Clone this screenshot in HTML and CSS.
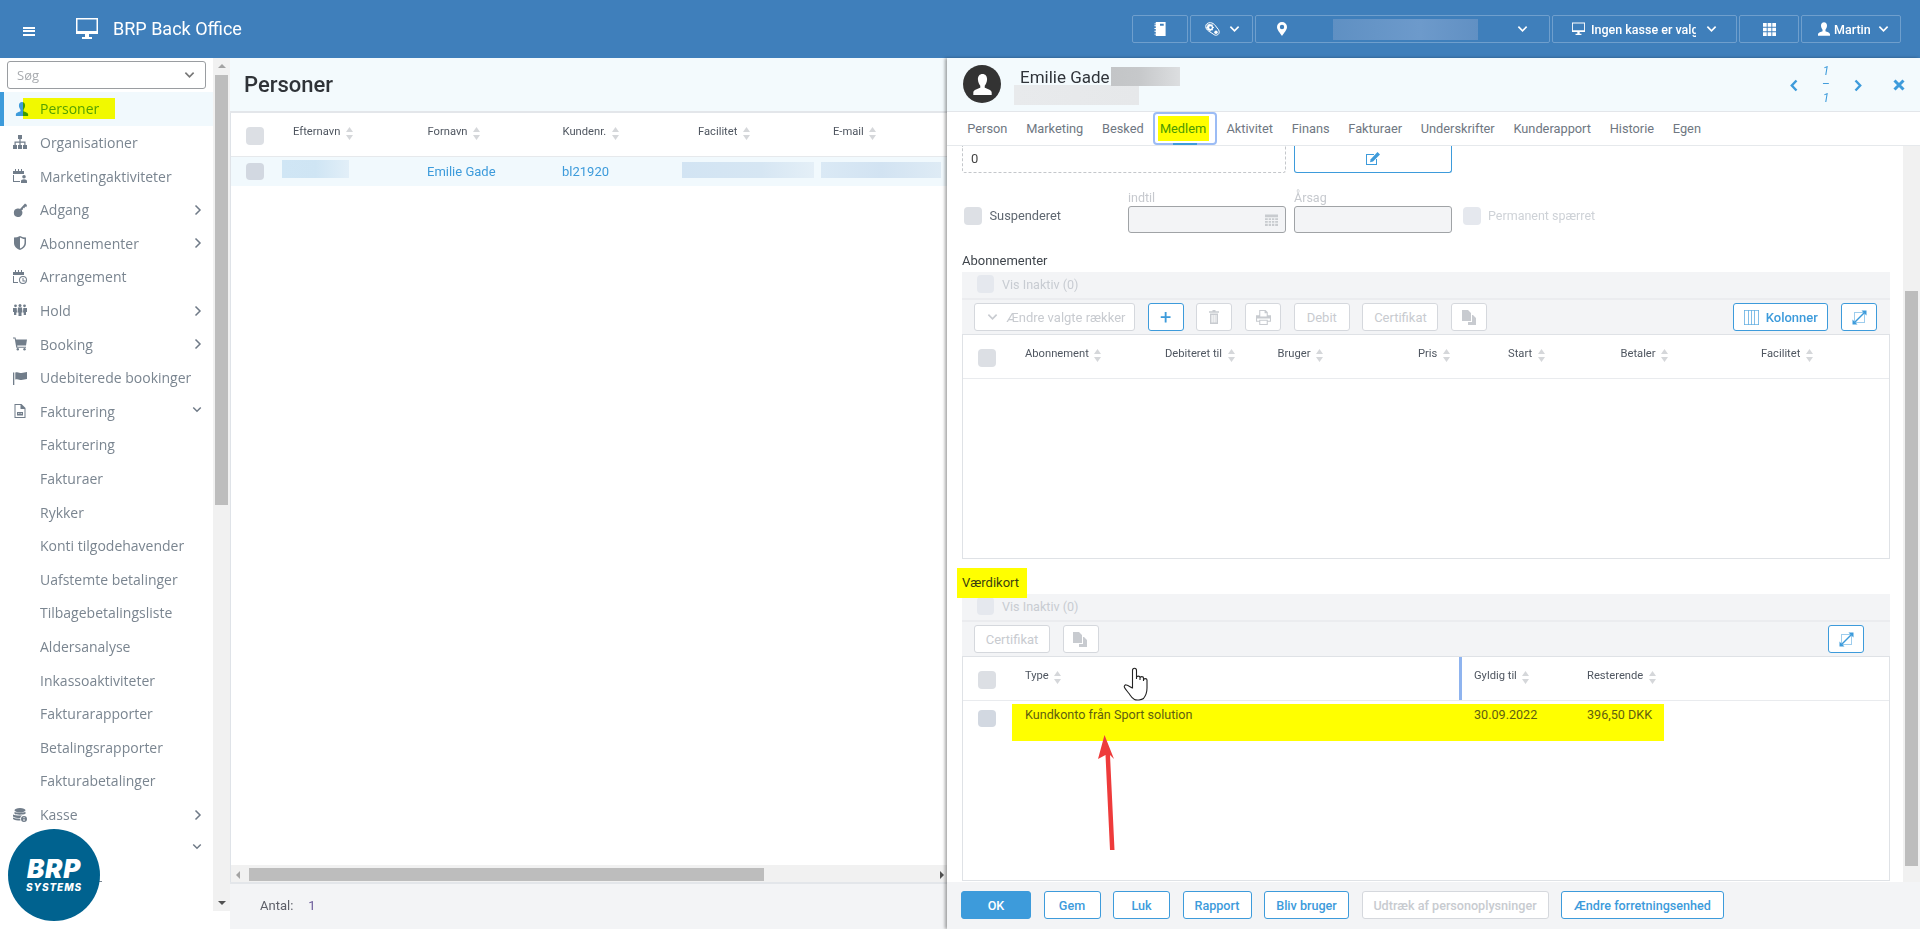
FILE: index.html
```html
<!DOCTYPE html>
<html lang="da">
<head>
<meta charset="utf-8">
<title>BRP Back Office</title>
<link rel="stylesheet" href="styles.css">
</head>
<body>
<svg class="defs" xmlns="http://www.w3.org/2000/svg">
  <symbol id="sort" viewBox="0 0 7 13"><path d="M3.500 0 7 5H0zM3.500 13 0 8h7z"/></symbol>
  <symbol id="chev-r" viewBox="0 0 8 12"><path d="M1.500 1.500 6 6l-4.500 4.500" fill="none" stroke="currentColor" stroke-width="1.500"/></symbol>
  <symbol id="chev-b" viewBox="0 0 8 13"><path d="M1.500 1.500 6.200 6.500 1.500 11.500" fill="none" stroke="currentColor" stroke-width="2.400"/></symbol>
  <symbol id="chev-d" viewBox="0 0 12 8"><path d="M1.500 1.500 6 6l4.500-4.500" fill="none" stroke="currentColor" stroke-width="1.800"/></symbol>
  <symbol id="close-x" viewBox="0 0 12 12"><path d="M1.500 1.500l9 9M10.500 1.500l-9 9" fill="none" stroke="currentColor" stroke-width="3"/></symbol>
  <symbol id="user" viewBox="0 0 14 16"><path d="M7 0c2.200 0 3.500 1.700 3.500 4S9.300 8 8.700 9v1.500c1.500.7 5.300 1.600 5.300 3.500v2H0v-2c0-1.900 3.800-2.800 5.300-3.500V9C4.700 8 3.500 6.300 3.500 4S4.800 0 7 0z"/></symbol>
  <symbol id="sitemap" viewBox="0 0 14 14"><path d="M5 0h4v4H7.600v2.500H12.500V10H14v4h-4v-4h1.300V7.700H7.600V10H9v4H5v-4h1.400V7.700H2.700V10H4v4H0v-4h1.500V6.500h4.900V4H5z"/></symbol>
  <symbol id="cal-user" viewBox="0 0 14 14"><path d="M0 2h2V0h1v2h2V0h1v2h2V0h1v2h2v3H0zM0 6h1v6h6v1H0z"/><path d="M11 6a1.800 1.800 0 1 1 0 3.600A1.800 1.800 0 0 1 11 6zM8 14v-2c0-1 1.500-1.800 3-1.800s3 .8 3 1.800v2z"/></symbol>
  <symbol id="key" viewBox="0 0 14 14"><path d="M4.500 5.500a4.300 4.300 0 1 1 0 8.500 4.300 4.300 0 0 1 0-8.500zM7 6l5-5.500L14 2l-.7 2.200L12 3.600l-.5 1.600-1.300-.4-.2 1.700-1.600.8z"/></symbol>
  <symbol id="shield" viewBox="0 0 14 14"><path d="M1 1.500C3 1.500 5 1 7 0c2 1 4 1.500 6 1.500V7c0 3.500-3 6-6 7-3-1-6-3.500-6-7zM7 1.500v11c2.200-.9 4.500-2.900 4.500-5.500V3C10 3 8.500 2.300 7 1.500z"/></symbol>
  <symbol id="cal-clock" viewBox="0 0 14 14"><path d="M0 2h2V0h1v2h2V0h1v2h2V0h1v2h2v3H0zM0 6h1v6h4v1H0z"/><path fill-rule="evenodd" d="M10 6a4 4 0 1 1 0 8 4 4 0 0 1 0-8zm0 1a3 3 0 1 0 0 6 3 3 0 0 0 0-6zm-.5 1h1v2.500h2v1h-3z"/></symbol>
  <symbol id="group" viewBox="0 0 14 12"><circle cx="7" cy="1.500" r="1.500"/><circle cx="2.500" cy="1.800" r="1.400"/><circle cx="11.500" cy="1.800" r="1.400"/><path d="M5 3.500h4l.5 5H8.500V12h-3V8.500h-1zM0 4h3.700l.3 4.500H3.300V11H1V8H0zM10.300 4H14v4h-1v3h-2.300V8.500H10z"/></symbol>
  <symbol id="cart" viewBox="0 0 14 13"><path d="M0 0h2.500l.5 2H14l-1 6H4.200l.2 1.300H13v1H3.300L1.700 1H0z"/><circle cx="4.800" cy="11.800" r="1.200"/><circle cx="11.500" cy="11.800" r="1.200"/></symbol>
  <symbol id="flag" viewBox="0 0 14 14"><path d="M0 1.500h1.300V14H0zM2.300 1.500C5 .5 6 2 8.500 2c2 0 3.500-1 5.500-1v7c-2 0-3.500 1-5.500 1C6 9 5 7.500 2.300 8.500z"/></symbol>
  <symbol id="invoice" viewBox="0 0 11 14"><path fill-rule="evenodd" d="M0 0h7l4 4v10H0zm1 1v12h9V5H6V1zM2.500 8h6v3.500h-6zm1 1v.8h.8V9zm1.600 0v.8h.8V9zm1.600 0v.8h.8V9z"/></symbol>
  <symbol id="cash" viewBox="0 0 14 14"><ellipse cx="7" cy="2.200" rx="5.500" ry="2.200"/><path d="M1.500 3.800C3 5 10 5 12.500 3.800v2C10 7 3 7 1.500 5.800zM0 6.500c2 1.200 8 1.400 9.500.7A4 4 0 0 0 7.200 10C4 10 1.500 9.500 0 8.500zM0 9.500c1.500.8 4 1.200 7.200 1.200l.3 1.800C4 12.500 1.500 12 0 11z"/><path fill-rule="evenodd" d="M11 8a3 3 0 1 1 0 6 3 3 0 0 1 0-6zm-.5 1v1h1V9zm0 1.700V13h1v-2.300z"/></symbol>
  <symbol id="book" viewBox="0 0 12 15"><path fill-rule="evenodd" d="M1.500 0H12v15H1.500v-1.500H0v-1h1.500v-2H0v-1h1.500v-2H0v-1h1.500v-2H0v-1h1.500V2.500H0v-1h1.500zM6 2v2h4V2z"/></symbol>
  <symbol id="gear-tag" viewBox="0 0 15 14"><path fill="none" stroke="currentColor" stroke-width="1" d="M.7 4.500C.7 2 3 .5 5.500.7c2 .2 3.500 1.300 4.500 2.500l3.500 4.500c1.300 2 .8 4-.7 5-1.500 1-3.500.5-4.700-.7L3.500 9C2 7.700.7 6.500.7 4.500z"/><path fill-rule="evenodd" d="M5.500 2.300l.9.3.7-.3.8.8-.3.8.5.8.8.2v1.100l-.8.3-.4.8.3.7-.8.8-.8-.3-.8.4-.2.8H4.800l-.3-.8-.8-.4-.7.3-.8-.8.3-.8-.4-.7-.8-.3V4.700l.8-.3.4-.8-.3-.7.8-.8.7.3.8-.4zm0 2a1.300 1.300 0 1 0 0 2.600 1.300 1.300 0 0 0 0-2.600z"/><circle cx="11" cy="10.300" r="1.700"/></symbol>
  <symbol id="pin" viewBox="0 0 10 14"><path fill-rule="evenodd" d="M5 0a5 5 0 0 1 5 5c0 3-3.500 6.500-5 9-1.500-2.500-5-6-5-9a5 5 0 0 1 5-5zm0 2.800a2.200 2.200 0 1 0 0 4.400 2.200 2.200 0 0 0 0-4.400z"/></symbol>
  <symbol id="monitor" viewBox="0 0 22 22"><path fill-rule="evenodd" d="M0 0h22v16H0zm1.500 1.500V13h19V1.500zM9 16h4v3h3v2H6v-2h3z"/></symbol>
  <symbol id="grid9" viewBox="0 0 14 14"><path d="M0 0h4v4H0zM5 0h4v4H5zM10 0h4v4h-4zM0 5h4v4H0zM5 5h4v4H5zM10 5h4v4h-4zM0 10h4v4H0zM5 10h4v4H5zM10 10h4v4h-4z"/></symbol>
  <symbol id="edit" viewBox="0 0 14 14"><path d="M0 2h8v1H1v9h9V7h1v6H0z"/><path d="M11.500 0 14 2.500 7 9.500l-3 .7.700-3z"/></symbol>
  <symbol id="calendar" viewBox="0 0 14 14"><path d="M0 1h14v3H0zM0 5h3v2H0zM4 5h2.500v2H4zM7.500 5H10v2H7.500zM11 5h3v2h-3zM0 8h3v2H0zM4 8h2.500v2H4zM7.500 8H10v2H7.500zM11 8h3v2h-3zM0 11h3v2.500H0zM4 11h2.500v2.500H4zM7.500 11H10v2.500H7.500zM11 11h3v2.500h-3z"/></symbol>
  <symbol id="trash" viewBox="0 0 10 14"><path d="M3.500 0h3v1.200H10v1.500H0V1.200h3.500zM1 3.500h8V14H1zm1.500 1.500v7.500h1.200V5zm2 0v7.500h1.200V5zm2 0v7.500h1V5z"/></symbol>
  <symbol id="print" viewBox="0 0 14 14"><path fill-rule="evenodd" d="M3 0h6l2 2v3h3v6h-3v3H3v-3H0V5h3zm1 1v5h6V3H8V1zM1 8v2h2V9h8v1h2V8zm3 2v3h6v-3z"/></symbol>
  <symbol id="copy" viewBox="0 0 15 15"><path d="M0 0h6l3 3v8H0zM10 5l1 0 3 3v7H6v-3h4z"/></symbol>
  <symbol id="cols" viewBox="0 0 15 15"><path fill-rule="evenodd" opacity=".8" d="M0 0h15v15H0zm.8.800v13.400h3.400V.8zm4.200 0v13.400h2.100V.8zm2.900 0v13.400h2.100V.8zm2.900 0v13.400h3.400V.8z"/></symbol>
  <symbol id="expand" viewBox="0 0 15 15"><rect x="2.500" y="2.500" width="10" height="10" fill="none" stroke="currentColor" opacity=".5"/><path d="M3 12 12 3" fill="none" stroke="currentColor" stroke-width="1.400"/><path d="M9.500.5H14.500V5.500zM.5 9.500V14.500H5.500z"/></symbol>
</svg>

<div class="app">
  <header class="topbar">
    <div class="brand">
      <div class="burger"><span></span><span></span><span></span></div>
      <svg class="ic-monitor"><use href="#monitor"/></svg>
      <div class="brand-name">BRP Back Office</div>
    </div>
    <nav class="top-tools">
      <div class="tool tool-book"><svg class="ic ic-top"><use href="#book"/></svg></div>
      <div class="tool tool-tag"><svg class="ic ic-top"><use href="#gear-tag"/></svg><svg class="ic-chev"><use href="#chev-d"/></svg></div>
      <div class="tool tool-loc"><svg class="ic ic-pin"><use href="#pin"/></svg><span class="blur-top"></span><svg class="ic-chev"><use href="#chev-d"/></svg></div>
      <div class="tool tool-kasse"><svg class="ic ic-mini"><use href="#monitor"/></svg><span class="kasse-txt">Ingen kasse er valg</span><svg class="ic-chev"><use href="#chev-d"/></svg></div>
      <div class="tool tool-grid"><svg class="ic ic-grid"><use href="#grid9"/></svg></div>
      <div class="tool tool-user"><svg class="ic ic-top"><use href="#user"/></svg><span>Martin</span><svg class="ic-chev"><use href="#chev-d"/></svg></div>
    </nav>
  </header>

  <div class="workspace">
    <aside class="sidebar">
      <div class="side-col">
        <div class="side-search"><span>Søg</span><svg class="ic-chev"><use href="#chev-d"/></svg></div>
        <ul class="menu">
          <li class="item active"><svg class="mi"><use href="#user"/></svg><span class="hl-name">Personer</span></li>
          <li class="item"><svg class="mi"><use href="#sitemap"/></svg>Organisationer</li>
          <li class="item"><svg class="mi"><use href="#cal-user"/></svg>Marketingaktiviteter</li>
          <li class="item"><svg class="mi"><use href="#key"/></svg>Adgang<svg class="arrow"><use href="#chev-r"/></svg></li>
          <li class="item"><svg class="mi"><use href="#shield"/></svg>Abonnementer<svg class="arrow"><use href="#chev-r"/></svg></li>
          <li class="item"><svg class="mi"><use href="#cal-clock"/></svg>Arrangement</li>
          <li class="item"><svg class="mi"><use href="#group"/></svg>Hold<svg class="arrow"><use href="#chev-r"/></svg></li>
          <li class="item"><svg class="mi"><use href="#cart"/></svg>Booking<svg class="arrow"><use href="#chev-r"/></svg></li>
          <li class="item"><svg class="mi"><use href="#flag"/></svg>Udebiterede bookinger</li>
          <li class="item"><svg class="mi"><use href="#invoice"/></svg>Fakturering<svg class="arrow-d"><use href="#chev-d"/></svg></li>
          <li class="item sub">Fakturering</li>
          <li class="item sub">Fakturaer</li>
          <li class="item sub">Rykker</li>
          <li class="item sub">Konti tilgodehavender</li>
          <li class="item sub">Uafstemte betalinger</li>
          <li class="item sub">Tilbagebetalingsliste</li>
          <li class="item sub">Aldersanalyse</li>
          <li class="item sub">Inkassoaktiviteter</li>
          <li class="item sub">Fakturarapporter</li>
          <li class="item sub">Betalingsrapporter</li>
          <li class="item sub">Fakturabetalinger</li>
          <li class="item"><svg class="mi"><use href="#cash"/></svg>Kasse<svg class="arrow"><use href="#chev-r"/></svg></li>
          <li class="item"><svg class="arrow-d"><use href="#chev-d"/></svg></li>
          <li class="item sub tail"></li>
        </ul>
      </div>
      <div class="vscroll side-scroll">
        <i class="tri-up"></i>
        <div class="thumb thumb-side"></div>
        <i class="tri-down"></i>
      </div>
      <div class="logo"><b>BRP</b><em>SYSTEMS</em></div>
    </aside>

    <main class="list">
      <div class="list-head"><h1>Personer</h1></div>
      <div class="list-body">
        <div class="list-row list-row-h">
          <span class="cb"></span>
          <span class="th">Efternavn<svg class="sort"><use href="#sort"/></svg></span>
          <span class="th">Fornavn<svg class="sort"><use href="#sort"/></svg></span>
          <span class="th">Kundenr.<svg class="sort"><use href="#sort"/></svg></span>
          <span class="th">Facilitet<svg class="sort"><use href="#sort"/></svg></span>
          <span class="th">E-mail<svg class="sort"><use href="#sort"/></svg></span>
        </div>
        <div class="list-row list-row-d">
          <span class="cb cb-row"></span>
          <span class="blur blur-a"></span>
          <a class="link">Emilie Gade</a>
          <a class="link">bl21920</a>
          <span class="blur blur-b"></span>
          <span class="blur blur-c"></span>
        </div>
      </div>
      <div class="hscroll"><i class="tri-left"></i><div class="thumb thumb-h"></div><i class="tri-right"></i></div>
      <div class="list-foot"><span>Antal:</span><span class="count">1</span></div>
    </main>

    <section class="panel">
      <div class="panel-head">
        <div class="avatar"><svg class="avatar-ic"><use href="#user"/></svg></div>
        <div class="who">
          <div class="who-name">Emilie Gade<span class="blur-name"></span></div>
          <span class="blur-sub"></span>
        </div>
        <div class="pager">
          <svg class="pg-chev flip"><use href="#chev-b"/></svg>
          <div class="pg-num"><i>1</i><i>–</i><i>1</i></div>
          <svg class="pg-chev"><use href="#chev-b"/></svg>
          <svg class="pg-x"><use href="#close-x"/></svg>
        </div>
      </div>
      <div class="tabs">
        <span class="tab">Person</span>
        <span class="tab">Marketing</span>
        <span class="tab">Besked</span>
        <span class="tab tab-on"><span class="tab-mark">Medlem</span></span>
        <span class="tab">Aktivitet</span>
        <span class="tab">Finans</span>
        <span class="tab">Fakturaer</span>
        <span class="tab">Underskrifter</span>
        <span class="tab">Kunderapport</span>
        <span class="tab">Historie</span>
        <span class="tab">Egen</span>
      </div>
      <div class="panel-scroll">
        <div class="panel-content">
          <div class="form form-top">
            <div class="dashed">0</div>
            <div class="edit-btn"><svg class="ic-edit"><use href="#edit"/></svg></div>
          </div>
          <div class="form form-susp">
            <label class="check"><span class="cb cb-s"></span>Suspenderet</label>
            <div class="field"><span class="lab">indtil</span><div class="inp"><svg class="ic-cal"><use href="#calendar"/></svg></div></div>
            <div class="field"><span class="lab">Årsag</span><div class="inp"></div></div>
            <label class="check check-off"><span class="cb cb-off"></span>Permanent spærret</label>
          </div>

          <h2 class="sec sec-a">Abonnementer</h2>
          <div class="bar"><span class="cb cb-off cb-bar"></span>Vis Inaktiv (0)</div>
          <div class="toolbar">
            <button class="btn off b-change"><svg class="ic-chev2"><use href="#chev-d"/></svg>Ændre valgte rækker</button>
            <button class="btn b-ic b-plus">+</button>
            <button class="btn off b-ic"><svg class="ti ti-t"><use href="#trash"/></svg></button>
            <button class="btn off b-ic"><svg class="ti"><use href="#print"/></svg></button>
            <button class="btn off b-debit">Debit</button>
            <button class="btn off b-cert">Certifikat</button>
            <button class="btn off b-ic"><svg class="ti"><use href="#copy"/></svg></button>
            <button class="btn b-cols"><svg class="ti"><use href="#cols"/></svg>Kolonner</button>
            <button class="btn b-ic"><svg class="ti"><use href="#expand"/></svg></button>
          </div>
          <div class="dt dt-a">
            <div class="dt-head dt-head-a">
              <span class="cb"></span>
              <span class="th">Abonnement<svg class="sort"><use href="#sort"/></svg></span>
              <span class="th">Debiteret til<svg class="sort"><use href="#sort"/></svg></span>
              <span class="th">Bruger<svg class="sort"><use href="#sort"/></svg></span>
              <span class="th">Pris<svg class="sort"><use href="#sort"/></svg></span>
              <span class="th">Start<svg class="sort"><use href="#sort"/></svg></span>
              <span class="th">Betaler<svg class="sort"><use href="#sort"/></svg></span>
              <span class="th">Facilitet<svg class="sort"><use href="#sort"/></svg></span>
            </div>
          </div>

          <h2 class="sec sec-b"><span class="sec-mark">Værdikort</span></h2>
          <div class="bar"><span class="cb cb-off cb-bar"></span>Vis Inaktiv (0)</div>
          <div class="toolbar toolbar-b">
            <button class="btn off b-cert">Certifikat</button>
            <button class="btn off b-ic"><svg class="ti"><use href="#copy"/></svg></button>
            <button class="btn b-ic b-end"><svg class="ti"><use href="#expand"/></svg></button>
          </div>
          <div class="dt dt-b">
            <div class="dt-head dt-head-b">
              <span class="cb"></span>
              <span class="th">Type<svg class="sort"><use href="#sort"/></svg></span>
              <span class="divider"></span>
              <span class="th">Gyldig til<svg class="sort"><use href="#sort"/></svg></span>
              <span class="th">Resterende<svg class="sort"><use href="#sort"/></svg></span>
            </div>
            <div class="vk-row">
              <span class="cb cb-row"></span>
              <div class="vk-mark">
                <span>Kundkonto från Sport solution</span>
                <span>30.09.2022</span>
                <span>396,50 DKK</span>
              </div>
            </div>
          </div>
        </div>
        <div class="vscroll panel-vs">
          <div class="thumb thumb-panel"></div>
        </div>
        <svg class="annot" viewBox="0 0 973 929">
          <path class="arrow-red" d="M157.500 735 167 759 163 755 167.500 850 163 850 158.500 755 151 759z"/>
          <path class="hand" d="M185.500 688V670.500c0-3 4-3 4 0V679 677.500c0-1.800 3.500-1.800 3.500 0V680 678c0-1.800 3.500-1.800 3.500 0V681 680c0-1.800 3.500-1.800 3.500 0v8c0 4-1.500 8-3.500 10.500-2 1.500-7 2-9 1-3-1.500-4-4-5.500-6-1.500-2-3.500-4-4.500-6-.8-1.500.5-3 2-2.500 2 .5 5 3 6 3z"/>
        </svg>
      </div>
      <div class="panel-foot">
        <button class="btn btn-ok">OK</button>
        <button class="btn f-gem">Gem</button>
        <button class="btn f-luk">Luk</button>
        <button class="btn f-rap">Rapport</button>
        <button class="btn f-bliv">Bliv bruger</button>
        <button class="btn off f-ud">Udtræk af personoplysninger</button>
        <button class="btn f-ae">Ændre forretningsenhed</button>
      </div>
    </section>
  </div>
</div>
</body>
</html>
```

FILE: styles.css
```css
* { box-sizing: border-box; }
html, body { margin: 0; height: 100%; overflow: hidden; }
body { font-family: Roboto, "Liberation Sans", sans-serif; font-size: 13px; color: #444b54; background: #fff; }
.defs { display: none; }
ul { list-style: none; margin: 0; padding: 0; }
h1, h2 { margin: 0; font-weight: 400; }
svg { fill: currentColor; display: block; flex: none; }

.app { height: 929px; display: flex; flex-direction: column; }

/* top bar */
.topbar { height: 58px; flex: none; background: #3f7fbb; color: #fff; display: flex; align-items: flex-start; justify-content: space-between; padding: 15px 19px 0 23px; }
.brand { display: flex; align-items: center; height: 28px; }
.burger { width: 12px; height: 9px; display: flex; flex-direction: column; justify-content: space-between; margin-top: 4px; }
.burger span { height: 2px; background: #fff; }
.ic-monitor { width: 22px; height: 22px; margin-left: 41px; }
.brand-name { font-size: 18px; margin-left: 15px; margin-top: -2px; }
.top-tools { display: flex; gap: 2px; }
.tool { height: 28px; border: 1px solid #6f9fcd; border-radius: 2px; display: flex; align-items: center; font-size: 12.500px; font-weight: 500; }
.ic-top { width: 12px; height: 14px; }
.ic-chev { width: 11px; height: 8px; }
.tool-book { width: 56px; justify-content: center; }
.tool-tag { width: 63px; padding-left: 14px; gap: 9px; }
.tool-tag .ic-top { width: 15px; height: 14px; }
.tool-loc { width: 295px; padding-left: 21px; }
.ic-pin { width: 10px; height: 14px; }
.blur-top { width: 145px; height: 21px; margin-left: 46px; background: linear-gradient(90deg, #5f90c3, #6d9acb 60%, #6190c3); }
.tool-loc .ic-chev { margin-left: 39px; }
.tool-kasse { width: 185px; padding-left: 19px; }
.ic-mini { width: 13px; height: 14px; }
.kasse-txt { width: 105px; overflow: hidden; white-space: nowrap; margin-left: 6px; }
.tool-kasse .ic-chev { margin-left: 10px; }
.tool-grid { width: 60px; justify-content: center; }
.ic-grid { width: 13px; height: 13px; }
.tool-user { width: 100px; padding-left: 16px; gap: 4px; }
.tool-user .ic-chev { margin-left: 3px; }

.workspace { flex: 1; display: flex; min-height: 0; }

/* sidebar */
.sidebar { width: 230px; flex: none; display: flex; align-items: flex-start; position: relative; height: 100%; background: #fff; }
.side-col { width: 213px; flex: none; height: 853px; overflow: hidden; }
.side-search { margin: 3px 7px 3px 7px; height: 28px; border: 1px solid #9a9da1; border-radius: 3px; display: flex; align-items: center; justify-content: space-between; padding: 0 10px 0 9px; color: #a8abaf; font-family: "Open Sans", sans-serif; font-size: 13px; }
.side-search .ic-chev { color: #777; }
.item { height: 33.620px; display: flex; align-items: center; font-family: "Open Sans", sans-serif; font-size: 14px; color: #7a8590; padding-left: 13px; position: relative; white-space: nowrap; }
.item.sub { padding-left: 40px; }
.item.active { background: #f1f9fd; border-left: 4px solid #3d9bdb; padding-left: 10.500px; }
.mi { width: 14px; height: 14px; margin-right: 13px; color: #717d8a; }
.active .mi { color: #3d9bdb; margin-right: -5.500px; }
.hl-name { background: #ff0; mix-blend-mode: multiply; color: #5aa500; width: 92px; height: 21px; line-height: 22px; padding-left: 17px; }
.arrow { width: 8px; height: 12px; position: absolute; right: 11px; top: 11px; color: #6f7a87; }
.arrow-d { width: 10px; height: 7px; position: absolute; right: 11px; top: 12px; color: #6f7a87; }
.tail::after { content: ""; position: absolute; left: 96px; top: 16px; width: 6px; height: 1px; background: #7a8590; }
.vscroll { width: 17px; flex: none; background: #f1f1f1; display: flex; flex-direction: column; align-items: center; position: relative; }
.side-scroll { height: 853px; padding: 6px 0 6px; justify-content: flex-start; }
.tri-up { width: 0; height: 0; border: 4px solid transparent; border-top: 0; border-bottom: 4px solid #a3a3a3; }
.tri-down { width: 0; height: 0; border: 4px solid transparent; border-bottom: 0; border-top: 4px solid #505050; margin-top: auto; }
.thumb { background: #bdbdbd; }
.thumb-side { width: 13px; height: 430px; margin-top: 7px; }
.logo { position: absolute; left: 8px; top: 771px; width: 92px; height: 92px; border-radius: 50%; background: #00628f; color: #fff; display: flex; flex-direction: column; align-items: center; justify-content: center; line-height: 1; }
.logo b { font-family: Inter, Roboto, sans-serif; font-style: italic; font-weight: 900; font-size: 26px; letter-spacing: .8px; line-height: 24px; }
.logo em { font-family: Inter, Roboto, sans-serif; font-style: italic; font-weight: 800; font-size: 10px; letter-spacing: .9px; line-height: 12px; }

/* list */
.list { width: 717px; flex: none; display: flex; flex-direction: column; }
.list-head { height: 55px; flex: none; background: #f3fafd; border-bottom: 2px solid #e3e6ea; padding: 12px 0 0 14px; }
h1 { font-size: 22px; font-weight: 500; color: #2f3338; line-height: 30px; }
.list-body { flex: 1; border-left: 1px solid #dfe3e8; }
.cb { width: 18px; height: 18px; background: #dcdfe4; border-radius: 4px; display: block; flex: none; }
.cb-row { height: 17px; background: #d2d8e1; }
.list-row { display: grid; grid-template-columns: 36px 145px 135px 120px 139px 1fr; padding-left: 15px; }
.list-row-h { height: 44px; grid-template-columns: 47px 134.500px 135px 135.500px 135px 1fr; padding-top: 14px; border-bottom: 1px solid #e6e9ec; }
.list-row-d { height: 29px; background: #f1f9fd; align-items: center; }
.list-row-d .cb { width: 18px; }
.th { font-size: 11.200px; color: #4f5660; display: flex; align-items: flex-start; gap: 5.500px; height: 14px; line-height: 12px; white-space: nowrap; margin-top: -1px; }
.sort { width: 7px; height: 13px; color: #d5d7da; margin-top: 1px; }
.link { color: #3d9bdb; font-size: 13px; }
.blur { display: block; height: 16px; }
.blur-a { width: 67px; height: 18px; background: linear-gradient(90deg, #d0e6f5, #cfe5f4 50%, #e2eff8); margin-top: -5px; }
.blur-b { width: 132px; background: linear-gradient(90deg, #d2e4f3, #d6e6f3 60%, #e4eff7); margin-top: -3px; }
.blur-c { width: 120px; background: linear-gradient(90deg, #dae9f5, #d2e3f2 50%, #deebf5); margin-top: -3px; }
.hscroll { height: 17px; flex: none; background: #f1f1f1; display: flex; align-items: center; padding: 2px 3px 0 5px; border-left: 1px solid #dfe3e8; }
.tri-left { width: 0; height: 0; border: 4px solid transparent; border-left: 0; border-right: 4px solid #a3a3a3; }
.tri-right { width: 0; height: 0; border: 4px solid transparent; border-right: 0; border-left: 4px solid #505050; margin-left: auto; }
.thumb-h { height: 13px; width: 515px; margin-left: 9px; }
.list-foot { height: 47px; flex: none; background: #f3f4f6; border-top: 2px solid #e3e6ea; display: flex; align-items: center; gap: 15px; padding: 0 0 2px 30px; font-size: 13px; color: #5d5f68; }
.count { color: #6a5a9a; }

/* panel */
.panel { width: 973px; flex: none; display: flex; flex-direction: column; position: relative; box-shadow: -2px 0 3px rgba(0,0,0,.35); background: #fff; }
.panel-head { height: 54px; flex: none; background: #f3fafd; border-bottom: 1px solid #e3e6ea; display: flex; padding-left: 16px; align-items: flex-start; }
.avatar { width: 38px; height: 38px; border-radius: 50%; background: #333; margin-top: 7px; display: flex; align-items: center; justify-content: center; }
.avatar-ic { width: 19px; height: 21px; color: #fff; }
.who { margin-left: 19px; padding-top: 9px; position: relative; }
.who-name { font-size: 17px; color: #30343a; line-height: 20px; display: flex; }
.blur-name { width: 69px; height: 19px; margin-left: 1px; background: linear-gradient(90deg, #c3c5c7, #c6c8ca 40%, #dcdee0); }
.blur-sub { display: block; width: 125px; height: 20px; margin: -2px 0 0 -6px; background: linear-gradient(90deg, #e8eaec, #e6e8ea); }
.pager { margin-left: auto; display: flex; align-items: center; height: 54px; color: #3d9bdb; padding-right: 15.500px; }
.pg-chev { width: 8px; height: 13px; }
.pg-chev.flip { transform: scaleX(-1); }
.pg-num { width: 56px; display: flex; flex-direction: column; align-items: center; font-size: 12px; line-height: 13.500px; }
.pg-num i:nth-child(2) { font-style: normal; }
.pg-x { width: 12px; height: 12px; margin-left: 30.500px; }
.tabs { height: 34px; flex: none; display: flex; border-bottom: 1px solid #e6e9ec; padding-left: 11px; align-items: stretch; position: relative; z-index: 2; background: #fff; }
.tab { padding: 0 9.350px; display: flex; align-items: center; font-size: 12.800px; color: #6f7782; }
.tab-on { width: 64px; padding: 2px 2.500px; border: 2px solid #9cbcf5; border-radius: 4px; position: relative; }
.tab-on::after { content: ""; position: absolute; left: 18px; right: 18px; bottom: -2px; height: 2px; background: #3d9bdb; }
.tab-mark { background: #ff0; color: #4c9a00; height: 25px; line-height: 25px; width: 51px; text-align: center; }

.panel-scroll { flex: 1; min-height: 0; display: flex; position: relative; overflow: hidden; }
.panel-content { width: 956px; flex: none; padding: 0 13px 0 15px; display: flex; flex-direction: column; }
.form { display: grid; grid-template-columns: repeat(3, 158px) auto; column-gap: 8px; flex: none; }
.form-top { height: 27px; }
.dashed { grid-column: span 2; border: 1px dashed #c4c7cb; border-top: 0; border-radius: 0 0 3px 3px; padding: 5px 0 0 8px; font-size: 13px; color: #444; }
.edit-btn { border: 1px solid #3d9bdb; border-top: 0; border-radius: 0 0 3px 3px; display: flex; align-items: center; justify-content: center; color: #3d9bdb; }
.ic-edit { width: 14px; height: 14px; }
.form-susp { margin-top: 17px; height: 43px; }
.check { display: flex; align-items: center; gap: 7.500px; padding: 16px 0 0 2px; height: 35px; color: #5f6770; font-size: 12.800px; align-self: start; }
.check-off { color: #ced2d7; padding-left: 3px; gap: 7px; font-size: 12.500px; }
.cb-s { background: #dde0e5; }
.cb-off { background: #e5e8ee; }
.lab { display: block; height: 16px; line-height: 15px; font-size: 12.500px; color: #c6c9ce; }
.inp { height: 27px; background: #f3f4f6; border: 1px solid #a0a3a6; border-radius: 3px; display: flex; align-items: center; justify-content: flex-end; padding-right: 7px; }
.ic-cal { width: 13px; height: 14px; color: #c8cbcf; }
.sec { font-size: 13px; color: #3f454c; line-height: 20px; flex: none; }
.sec-a { margin-top: 18px; height: 21px; }
.sec-b { margin-top: 9px; height: 26px; margin-left: -5px; }
.sec-mark { display: inline-block; width: 70px; height: 30px; line-height: 29px; background: #ff0; padding-left: 5px; color: #3b3f10; position: relative; z-index: 1; }
.bar { height: 28px; flex: none; background: #f3f4f6; border-bottom: 2px solid #ebecef; display: flex; align-items: center; padding: 0 0 2px 15px; gap: 8px; color: #c8ccd2; font-size: 12.600px; }
.cb-bar { width: 17px; height: 18px; }
.toolbar { height: 34px; flex: none; background: #f3f4f6; display: flex; gap: 12.700px; padding: 3px 13px 0 12px; align-items: flex-start; }
.toolbar-b { padding-right: 26px; }
.btn { height: 28px; padding: 0; background: #fff; border: 1px solid #3d9bdb; border-radius: 3px; color: #3d9bdb; font-family: Roboto, sans-serif; font-size: 13px; display: flex; align-items: center; justify-content: center; flex: none; }
.btn.off { border-color: #d5d8dd; color: #c8cbd0; }
.b-ic { width: 36px; }
.b-plus { font-size: 20px; font-weight: 400; line-height: 1; }
.b-change { width: 161px; gap: 9px; padding-left: 3px; }
.ic-chev2 { width: 11px; height: 8px; }
.b-debit { width: 56px; }
.b-cert { width: 76px; }
.b-cols { width: 95px; margin-left: auto; gap: 7px; font-weight: 500; }
.b-end { margin-left: auto; }
.ti { width: 15px; height: 15px; }
.ti-t { width: 10px; height: 14px; }
.dt { flex: none; border: 1px solid #dfe2e6; }
.dt-a { height: 225px; }
.dt-b { height: 225px; }
.dt-head { height: 44px; border-bottom: 1px solid #e9ebee; display: grid; padding: 14px 0 0 15px; }
.dt-head-a { grid-template-columns: 47px 140px 112.500px 140.500px 90px 112.500px 140.500px 1fr; }
.dt-head-b { grid-template-columns: 47px 434px 15px 113px 1fr; position: relative; }
.divider { width: 3px; height: 43px; background: #8fb4ef; margin-top: -14px; }
.vk-row { display: flex; align-items: flex-start; padding: 3px 0 0 15px; }
.vk-row .cb { margin: 6px 16px 0 0; }
.vk-mark { width: 652px; height: 37px; background: #ff0; display: grid; grid-template-columns: 449px 113px 1fr; padding: 3px 0 0 13px; color: #5f5f10; font-size: 12.600px; line-height: 15px; }

.panel-vs { height: 100%; }
.thumb-panel { width: 13px; height: 575px; margin-top: 145px; }
.annot { position: absolute; left: 0; top: -146px; width: 973px; height: 929px; pointer-events: none; fill: none; overflow: visible; }
.arrow-red { fill: #ee3b3b; }
.hand { fill: #fff; stroke: #222; stroke-width: 1.100; }

.panel-foot { height: 47px; flex: none; background: #f3f4f6; display: flex; gap: 12.500px; padding: 9px 0 0 14px; align-items: flex-start; }
.panel-foot .btn { font-weight: 500; font-size: 12.600px; }
.btn-ok { width: 70px; background: #3d9bdb; color: #fff; border-color: #3d9bdb; }
.f-gem, .f-luk { width: 57px; }
.f-rap { width: 69px; }
.f-bliv { width: 85px; }
.f-ud { width: 187px; }
.f-ae { width: 163px; }
```
